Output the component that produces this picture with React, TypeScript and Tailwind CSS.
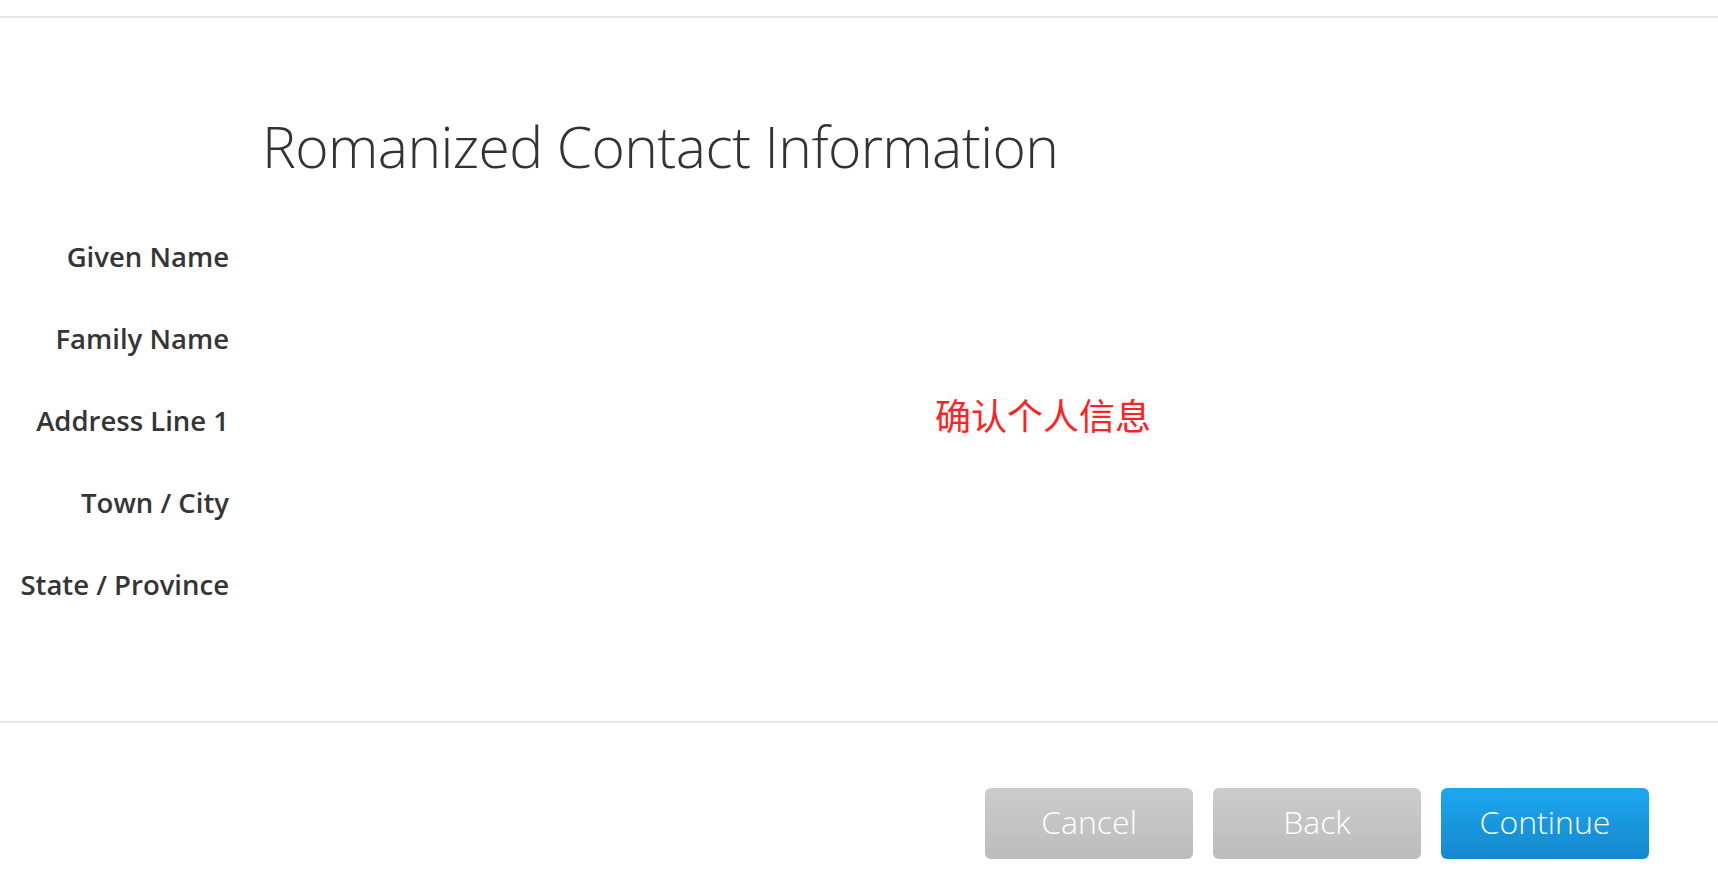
import React from "react";

const labels = ["Given Name", "Family Name", "Address Line 1", "Town / City", "State / Province"];

export default function App() {
  return (
    <div
      className="relative w-full h-[872px] bg-white overflow-hidden"
      style={{ fontFamily: '"Open Sans", "Noto Sans", "Liberation Sans", sans-serif' }}
    >
      <div className="h-[16px]" />
      <div className="h-[2px] bg-[#e6e6e6]" />
      <div className="h-[703px] flex flex-col">
        <div className="pl-[262px] pt-[88px]">
          <h1 className="text-[57px] leading-[80px] font-light text-[#333333] tracking-[-0.6px]">
            Romanized Contact Information
          </h1>
        </div>
        <div className="flex flex-col mt-[30px]">
          {labels.map((l) => (
            <div key={l} className="flex h-[82px] items-center">
              <div className="w-[229px] text-right text-[27.5px] font-semibold text-[#353535]">{l}</div>
            </div>
          ))}
        </div>
      </div>
      <div className="h-[2px] bg-[#e6e6e6]" />
      <div className="flex justify-end gap-[20px] pr-[69px] pt-[65px]">
        {["Cancel", "Back"].map((b) => (
          <button
            key={b}
            className="w-[208px] h-[71px] pb-[3px] rounded-[6px] bg-gradient-to-b from-[#cccccc] to-[#bcbcbc] text-white text-[32px] font-light"
          >
            {b}
          </button>
        ))}
        <button className="w-[208px] h-[71px] pb-[3px] rounded-[6px] bg-gradient-to-b from-[#1ca7f0] to-[#1588cd] text-white text-[32px] font-light">
          Continue
        </button>
      </div>
      <div
        className="absolute left-[935px] top-[394px] text-[36px] leading-[40px] text-[#ff2222]"
        style={{ fontFamily: '"Noto Sans CJK SC", sans-serif' }}
      >
        确认个人信息
      </div>
    </div>
  );
}
